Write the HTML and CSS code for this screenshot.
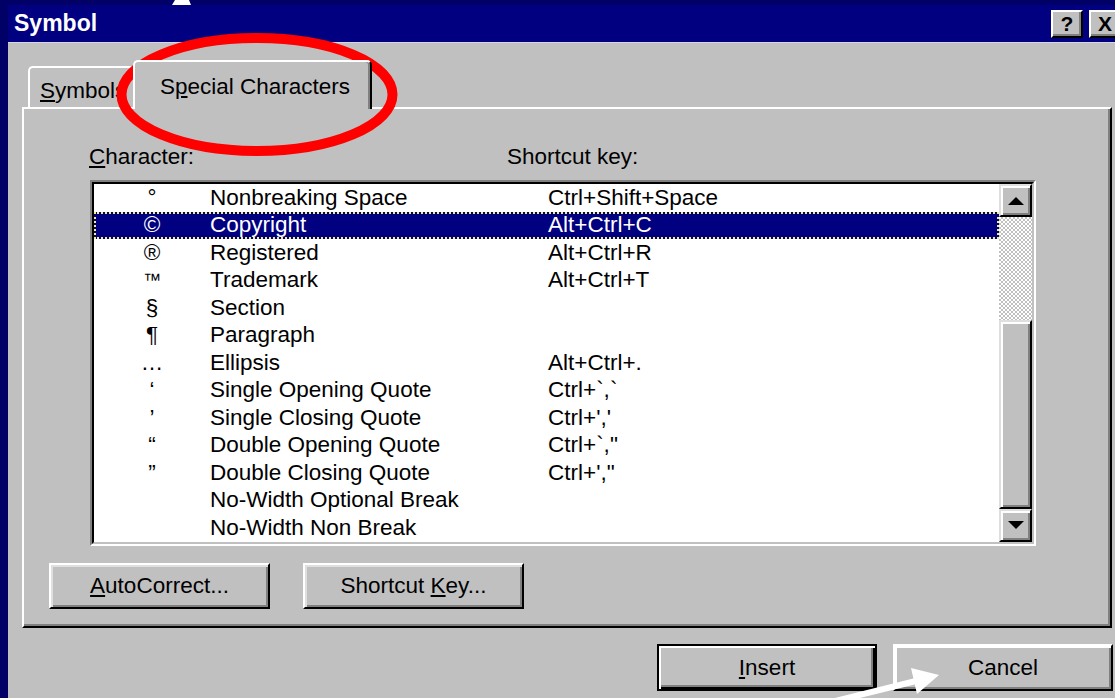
FILE: index.html
```html
<!DOCTYPE html>
<html lang="en">
<head>
<meta charset="utf-8">
<title>Symbol</title>
<link rel="stylesheet" href="styles.css">
</head>
<body>
<div class="window">
  <div class="titlebar">
    <span class="title">Symbol</span>
    <div class="caption-buttons">
      <span class="cap-btn">?</span>
      <span class="cap-btn">X</span>
    </div>
  </div>
  <div class="dialog">
    <div class="tabs">
      <div class="tab"><u>S</u>ymbols</div>
      <div class="tab active">S<u>p</u>ecial Characters</div>
    </div>
    <div class="panel">
      <div class="labels">
        <span class="label-char"><u>C</u>haracter:</span>
        <span class="label-key">Shortcut key:</span>
      </div>
      <div class="listbox">
        <div class="list-inner">
          <div class="rows">
            <div class="row"><span class="c-char">°</span><span class="c-name">Nonbreaking Space</span><span class="c-key">Ctrl+Shift+Space</span></div>
            <div class="row selected"><span class="c-char">©</span><span class="c-name">Copyright</span><span class="c-key">Alt+Ctrl+C</span></div>
            <div class="row"><span class="c-char">®</span><span class="c-name">Registered</span><span class="c-key">Alt+Ctrl+R</span></div>
            <div class="row"><span class="c-char tm">™</span><span class="c-name">Trademark</span><span class="c-key">Alt+Ctrl+T</span></div>
            <div class="row"><span class="c-char">§</span><span class="c-name">Section</span><span class="c-key"></span></div>
            <div class="row"><span class="c-char">¶</span><span class="c-name">Paragraph</span><span class="c-key"></span></div>
            <div class="row"><span class="c-char">…</span><span class="c-name">Ellipsis</span><span class="c-key">Alt+Ctrl+.</span></div>
            <div class="row"><span class="c-char">‘</span><span class="c-name">Single Opening Quote</span><span class="c-key">Ctrl+`,`</span></div>
            <div class="row"><span class="c-char">’</span><span class="c-name">Single Closing Quote</span><span class="c-key">Ctrl+','</span></div>
            <div class="row"><span class="c-char">“</span><span class="c-name">Double Opening Quote</span><span class="c-key">Ctrl+`,"</span></div>
            <div class="row"><span class="c-char">”</span><span class="c-name">Double Closing Quote</span><span class="c-key">Ctrl+',"</span></div>
            <div class="row"><span class="c-char"></span><span class="c-name">No-Width Optional Break</span><span class="c-key"></span></div>
            <div class="row"><span class="c-char"></span><span class="c-name">No-Width Non Break</span><span class="c-key"></span></div>
          </div>
          <div class="scrollbar">
            <div class="sb-btn"><span class="arrow-up"></span></div>
            <div class="sb-track"></div>
            <div class="sb-thumb"></div>
            <div class="sb-btn"><span class="arrow-down"></span></div>
          </div>
        </div>
      </div>
      <div class="panel-buttons">
        <button class="btn"><u>A</u>utoCorrect...</button>
        <button class="btn">Shortcut <u>K</u>ey...</button>
      </div>
    </div>
    <div class="footer">
      <button class="btn default"><u>I</u>nsert</button>
      <button class="btn cancel">Cancel</button>
    </div>
  </div>
</div>

<!-- slide annotations drawn over the dialog -->
<svg class="annotations" width="1115" height="698" viewBox="0 0 1115 698">
  <polygon points="175,0 189,0 191,5 172,5" fill="#ffffff"/>
  <ellipse cx="257" cy="94.5" rx="135.5" ry="56.5" fill="none" stroke="#ff0000" stroke-width="10"/>
  <line x1="815" y1="706" x2="916" y2="681" stroke="#ffffff" stroke-width="6"/>
  <polygon points="939,675 911,668 917,694" fill="#ffffff"/>
</svg>
</body>
</html>
```

FILE: styles.css
```css
body {
  margin: 0;
  width: 1115px;
  height: 698px;
  overflow: hidden;
  background: #000066;
  font-family: "Liberation Sans", Arial, sans-serif;
  font-size: 22.5px;
  color: #000;
  position: relative;
}

.window {
  margin: 5px 0 0 8px;
  height: 693px;
  background: #c0c0c0;
  display: flex;
  flex-direction: column;
}

/* caption */
.titlebar {
  height: 37px;
  background: #000080;
  border-bottom: 1px solid #d6d6e6;
  display: flex;
  align-items: center;
  justify-content: space-between;
  padding-left: 6px;
}

.title {
  color: #fff;
  font-weight: bold;
  font-size: 23px;
}

.caption-buttons {
  display: flex;
  gap: 6px;
  margin-right: -6px;
}

.cap-btn {
  width: 32px;
  height: 28px;
  box-sizing: border-box;
  background: #c0c0c0;
  border: 2px solid;
  border-color: #fff #000 #000 #fff;
  box-shadow: inset -2px -2px #808080;
  font-weight: bold;
  font-size: 21px;
  display: flex;
  align-items: center;
  justify-content: center;
  color: #000;
}

/* dialog body */
.dialog {
  flex: 1;
  padding-top: 17px;
}

.tabs {
  display: flex;
  align-items: flex-end;
  height: 47px;
  padding-left: 20px;
}

.tab {
  box-sizing: border-box;
  height: 41px;
  width: 112px;
  border-top: 2px solid #fff;
  border-left: 2px solid #fff;
  border-radius: 5px 5px 0 0;
  padding: 6px 0 0 10px;
  display: flex;
  align-items: center;
  white-space: nowrap;
  overflow: hidden;
}

.tab.active {
  height: 49px;
  width: 239px;
  margin-left: -7px;
  margin-bottom: -2px;
  position: relative;
  z-index: 1;
  background: #c0c0c0;
  border-right: 2px solid #000;
  box-shadow: inset -2px 0 #808080;
  padding: 2px 0 0 25px;
}

.panel {
  margin-left: 14px;
  width: 1090px;
  height: 521px;
  box-sizing: border-box;
  border-style: solid;
  border-width: 2px;
  border-color: #fff #000 #000 #fff;
  box-shadow: inset -2px -2px #808080;
  padding: 36px 0 0 25px;
}

.labels {
  display: flex;
  height: 24px;
  line-height: 24px;
  margin-bottom: 11px;
}

.label-char {
  margin-left: 40px;
  width: 418px;
}

/* list box */
.listbox {
  margin-left: 41px;
  width: 946px;
  box-sizing: border-box;
  border: 2px solid;
  border-color: #808080 #fff #fff #808080;
}

.list-inner {
  border: 2px solid;
  border-color: #000 #c0c0c0 #c0c0c0 #000;
  background: #fff;
  display: flex;
}

.rows {
  flex: 1;
}

.row {
  display: flex;
  align-items: center;
  height: 27.5px;
  box-sizing: border-box;
  white-space: nowrap;
}

.row.selected {
  background: #000080;
  color: #fff;
  outline: 2px dotted #f2f27a;
  outline-offset: -2px;
}

.c-char {
  width: 116px;
  text-align: center;
}

.c-char.tm {
  font-size: 18px;
}

.c-name {
  width: 338px;
}

.scrollbar {
  width: 33px;
  display: flex;
  flex-direction: column;
}

.sb-btn,
.sb-thumb {
  box-sizing: border-box;
  background: #c0c0c0;
  border: 2px solid;
  border-color: #dfdfdf #000 #000 #dfdfdf;
  box-shadow: inset 2px 2px #fff, inset -2px -2px #808080;
}

.sb-btn {
  height: 33px;
  display: flex;
  align-items: center;
  justify-content: center;
}

.sb-track {
  height: 103px;
  background-color: #fff;
  background-image: repeating-conic-gradient(#c0c0c0 0 25%, #fff 0 50%);
  background-size: 4px 4px;
}

.sb-thumb {
  flex: 1;
}

.arrow-up,
.arrow-down {
  width: 0;
  height: 0;
  border-left: 8px solid transparent;
  border-right: 8px solid transparent;
}

.arrow-up {
  border-bottom: 8px solid #000;
}

.arrow-down {
  border-top: 8px solid #000;
}

/* push buttons */
.panel-buttons {
  display: flex;
  gap: 33px;
  margin-top: 17px;
}

.btn {
  width: 221px;
  height: 46px;
  box-sizing: border-box;
  background: #c0c0c0;
  border: 2px solid;
  border-color: #fff #000 #000 #fff;
  box-shadow: inset 2px 2px #dfdfdf, inset -2px -2px #808080;
  font-family: "Liberation Sans", Arial, sans-serif;
  font-size: 22.5px;
  color: #000;
  padding: 0;
}

.footer {
  display: flex;
  justify-content: flex-end;
  gap: 16px;
  padding-right: 2px;
  margin-top: 16px;
}

.footer .btn {
  width: 220px;
  height: 47px;
}

.btn.default {
  border-color: #000;
  box-shadow: inset 2px 2px #fff, inset -2px -2px #000, inset -4px -4px #808080;
}

.btn.cancel {
  box-shadow: inset 2px 2px #fff, inset -2px -2px #808080;
}

.annotations {
  position: absolute;
  top: 0;
  left: 0;
  pointer-events: none;
}
```
